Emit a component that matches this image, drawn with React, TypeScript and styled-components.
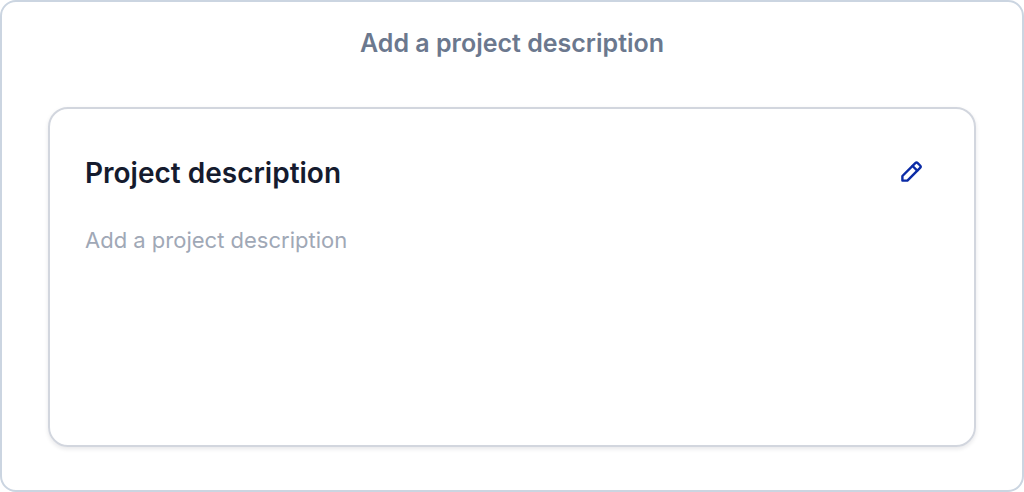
import React from "react";
import styled, { createGlobalStyle } from "styled-components";

const GlobalStyle = createGlobalStyle`
  *, *::before, *::after { box-sizing: border-box; }
  html, body, #root { height: 100%; }
  body {
    margin: 0;
    background: #ffffff;
    font-family: Inter, "Liberation Sans", sans-serif;
  }
`;

const Panel = styled.main`
  display: flex;
  flex-direction: column;
  gap: 47px;
  min-height: 100%;
  padding: 24px 46px 43px;
  border: 2px solid #cbd5e1;
  border-radius: 16px;
`;

const PanelTitle = styled.h1`
  margin: 0;
  color: #6b788e;
  font-size: 25px;
  font-weight: 600;
  line-height: 34px;
  text-align: center;
`;

const Card = styled.section`
  flex: 1;
  padding: 44px 35px;
  border: 2px solid #d2d6de;
  border-radius: 20px;
  box-shadow: 0 2px 4px rgba(15, 23, 42, 0.1);
`;

const CardHeader = styled.header`
  display: flex;
  align-items: flex-start;
  justify-content: space-between;
  padding-right: 8px;
`;

const CardTitle = styled.h2`
  margin: 0;
  color: #151b2e;
  font-size: 28px;
  font-weight: 600;
  line-height: 40px;
`;

const EditButton = styled.button`
  display: flex;
  padding: 7px;
  border: 0;
  border-radius: 8px;
  background: none;
  color: #0b2ba6;
  cursor: pointer;
`;

const Placeholder = styled.p`
  margin: 31px 0 0;
  color: #a0a8b6;
  font-size: 22px;
  font-weight: 400;
  line-height: 32px;
`;

const PencilIcon = () => (
  <svg
    width="24"
    height="24"
    viewBox="0 0 24 24"
    fill="none"
    stroke="currentColor"
    strokeWidth="2.4"
    strokeLinecap="round"
    strokeLinejoin="round"
    aria-hidden="true"
  >
    <path d="M2.4 16 15.3 3.1a1.7 1.7 0 0 1 2.4 0l2.4 2.4a1.7 1.7 0 0 1 0 2.4L7.4 20.6H2.4z" />
    <path d="m12.6 6 4.6 4.6" />
  </svg>
);

export default function App() {
  return (
    <>
      <GlobalStyle />
      <Panel>
        <PanelTitle>Add a project description</PanelTitle>
        <Card>
          <CardHeader>
            <CardTitle>Project description</CardTitle>
            <EditButton type="button" aria-label="Edit project description">
              <PencilIcon />
            </EditButton>
          </CardHeader>
          <Placeholder>Add a project description</Placeholder>
        </Card>
      </Panel>
    </>
  );
}
